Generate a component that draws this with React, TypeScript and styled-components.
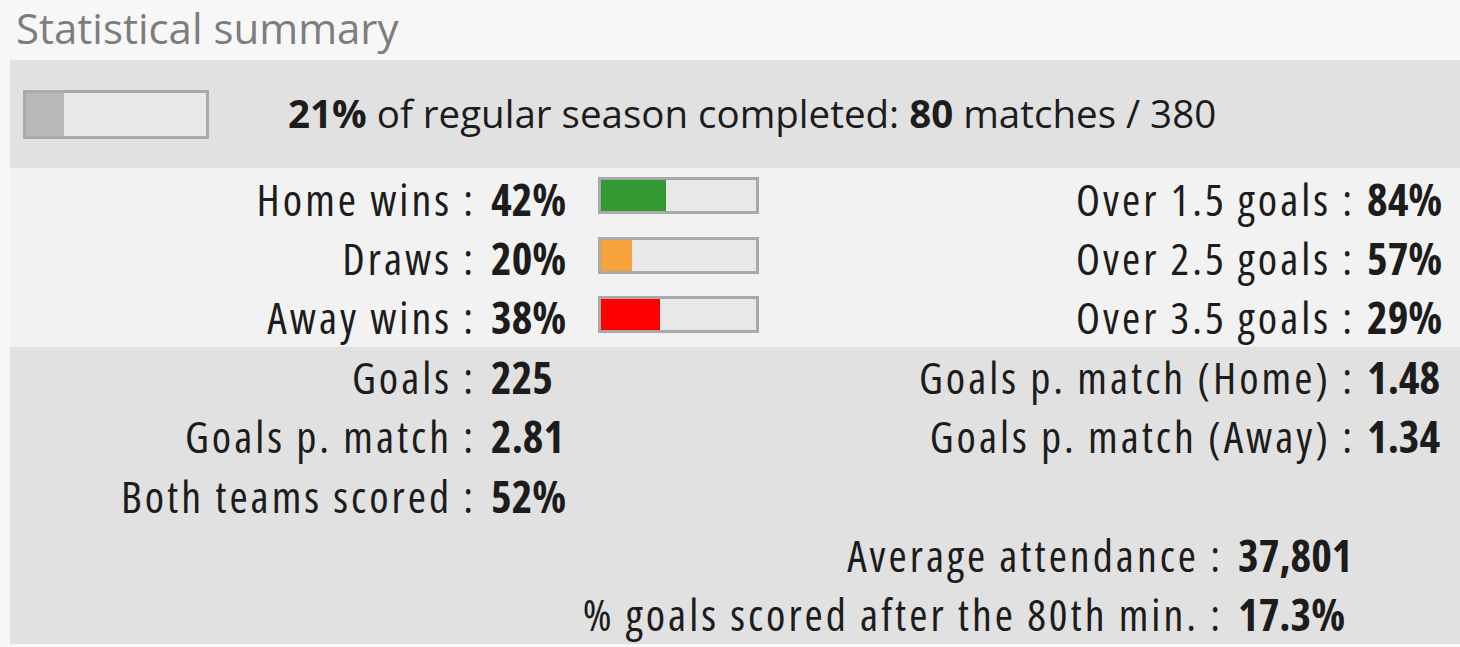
import styled, { createGlobalStyle } from "styled-components";

const GlobalStyle = createGlobalStyle`
  html, body {
    margin: 0;
    padding: 0;
    background: #f7f7f7;
  }
  body {
    font-family: "Open Sans", "Noto Sans", sans-serif;
    color: #1c1c1c;
  }
`;

type Stat = { label: string; value: string; bar?: string };

const outcomes: Stat[] = [
  { label: "Home wins :", value: "42%", bar: "#339933" },
  { label: "Draws :", value: "20%", bar: "#f7a23b" },
  { label: "Away wins :", value: "38%", bar: "#ff0000" },
];

const overs: Stat[] = [
  { label: "Over 1.5 goals :", value: "84%" },
  { label: "Over 2.5 goals :", value: "57%" },
  { label: "Over 3.5 goals :", value: "29%" },
];

export default function App() {
  return (
    <>
      <GlobalStyle />
      <Page>
        <Title>Statistical summary</Title>
        <Panel>
          <SeasonBand>
            <Meter $size="big">
              <MeterFill $color="#b8b8b8" style={{ width: "21%" }} />
            </Meter>
            <SeasonText>
              <b>21%</b> of regular season completed: <b>80</b> matches / 380
            </SeasonText>
          </SeasonBand>

          <OutcomeGrid>
            {outcomes.map((o, i) => (
              <Row key={o.label}>
                <Label>{o.label}</Label>
                <Value>{o.value}</Value>
                <BarCell>
                  <Meter $size="small">
                    <MeterFill $color={o.bar!} style={{ width: o.value }} />
                  </Meter>
                </BarCell>
                <Label>{overs[i].label}</Label>
                <Value $right>{overs[i].value}</Value>
              </Row>
            ))}
          </OutcomeGrid>

          <GoalsGrid>
            <Row>
              <Label>Goals :</Label>
              <Value>225</Value>
              <span />
              <Label>Goals p. match (Home) :</Label>
              <Value $right>1.48</Value>
            </Row>
            <Row>
              <Label>Goals p. match :</Label>
              <Value>2.81</Value>
              <span />
              <Label>Goals p. match (Away) :</Label>
              <Value $right>1.34</Value>
            </Row>
            <Row>
              <Label>Both teams scored :</Label>
              <Value>52%</Value>
            </Row>
            <WideRow>
              <Label>Average attendance :</Label>
              <Value>37,801</Value>
            </WideRow>
            <WideRow>
              <Label>% goals scored after the 80th min. :</Label>
              <Value>17.3%</Value>
            </WideRow>
          </GoalsGrid>
        </Panel>
      </Page>
    </>
  );
}

const Page = styled.div`
  width: 1460px;
  height: 647px;
  overflow: hidden;
`;

const Title = styled.h2`
  margin: 0;
  height: 60px;
  padding-left: 16px;
  font-size: 42px;
  font-weight: 400;
  line-height: 56px;
  color: #7d7d7d;
`;

const Panel = styled.div`
  margin-left: 10px;
`;

const SeasonBand = styled.div`
  display: flex;
  align-items: center;
  height: 108px;
  background: #e1e1e1;
  padding-left: 13px;
  gap: 79px;
`;

const Meter = styled.div<{ $size: "big" | "small" }>`
  box-sizing: border-box;
  width: ${(p) => (p.$size === "big" ? "186px" : "161px")};
  height: ${(p) => (p.$size === "big" ? "49px" : "37px")};
  border: 3px solid #a9a9a9;
  background: #e8e8e8;
  display: flex;
`;

const MeterFill = styled.div<{ $color: string }>`
  height: 100%;
  background: ${(p) => p.$color};
`;

const SeasonText = styled.div`
  font-size: 38.5px;
  color: #1c1c1c;
  margin-top: -2px;

  b {
    font-weight: 700;
  }
`;

const OutcomeGrid = styled.div`
  background: #f2f2f2;
  padding-top: 1px;
  display: grid;
  grid-template-columns: 466px 122px 161px 1fr 105px;
  grid-auto-rows: 59.4px;
`;

const GoalsGrid = styled(OutcomeGrid)`
  background: #e1e1e1;
  padding-top: 0;
`;

const Row = styled.div`
  display: contents;
`;

const WideRow = styled.div`
  grid-column: 1 / -1;
  display: grid;
  grid-template-columns: 1213px 1fr;
`;

const Label = styled.span`
  text-align: right;
  align-self: center;
  white-space: nowrap;
  font-size: 44px;
  font-stretch: 75%;
  letter-spacing: 3px;
  line-height: 1;
`;

const Value = styled.span<{ $right?: boolean }>`
  align-self: center;
  white-space: nowrap;
  padding-left: ${(p) => (p.$right ? "12px" : "15px")};
  font-size: 44px;
  font-stretch: 75%;
  font-weight: 700;
  line-height: 1;
`;

const BarCell = styled.div`
  display: flex;
  align-items: center;
  padding-bottom: 6px;
`;
